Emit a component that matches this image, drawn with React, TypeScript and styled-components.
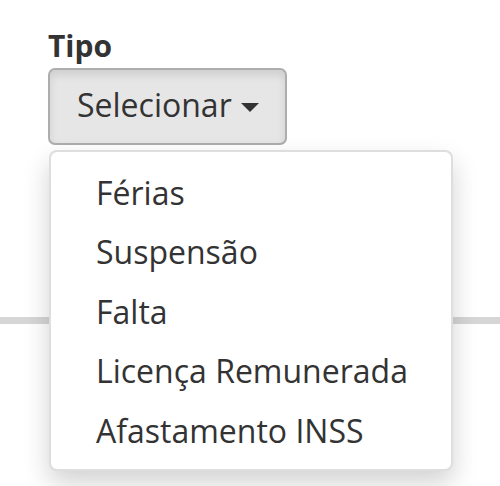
import React from "react";
import styled, { createGlobalStyle } from "styled-components";

const Global = createGlobalStyle`
  html, body { margin: 0; padding: 0; background: #ffffff; }
  body { font-family: "Open Sans", "Liberation Sans", sans-serif; color: #333333; }
  * { box-sizing: border-box; }
`;

const Page = styled.div`
  width: 500px;
  height: 486px;
  overflow: hidden;
  display: flex;
  flex-direction: column;
`;

const Field = styled.div`
  padding: 25px 0 0 48px;
  height: 317px;
`;

const Label = styled.div`
  font-size: 30px;
  font-weight: 700;
  line-height: 42px;
  height: 43px;
  color: #333333;
`;

const DropdownWrap = styled.div`
  position: relative;
  display: inline-block;
`;

const ToggleButton = styled.button`
  display: flex;
  align-items: center;
  gap: 9px;
  height: 77px;
  width: 239px;
  padding: 0 0 3px 27px;
  font-family: "Open Sans", "Liberation Sans", sans-serif;
  font-size: 32px;
  line-height: 42px;
  color: #333333;
  background: #e6e6e6;
  border: 2px solid #adadad;
  border-radius: 7px;
  box-shadow: inset 0 5px 9px rgba(0, 0, 0, 0.1);
`;

const Caret = styled.span`
  display: inline-block;
  width: 0;
  height: 0;
  border-top: 9px solid #333333;
  border-left: 9px solid transparent;
  border-right: 9px solid transparent;
  margin-top: 4px;
`;

const Menu = styled.ul`
  position: absolute;
  top: 82px;
  left: 1px;
  width: 404px;
  height: 321px;
  margin: 0;
  padding: 11px 0 13px;
  list-style: none;
  background: #ffffff;
  border: 2px solid rgba(0, 0, 0, 0.13);
  border-radius: 8px;
  box-shadow: 0 12px 26px rgba(0, 0, 0, 0.18);
  z-index: 10;
`;

const Item = styled.li`
  padding: 0 0 0 45px;
  font-size: 32px;
  line-height: 59.4px;
  height: 59.4px;
  color: #333333;
  white-space: nowrap;
`;

const Divider = styled.div`
  height: 7px;
  background: #d6d6d6;
  width: 100%;
`;

const items = ["Férias", "Suspensão", "Falta", "Licença Remunerada", "Afastamento INSS"];

export default function App() {
  return (
    <Page>
      <Global />
      <Field>
        <Label>Tipo</Label>
        <DropdownWrap>
          <ToggleButton>
            Selecionar
            <Caret />
          </ToggleButton>
          <Menu>
            {items.map((t) => (
              <Item key={t}>{t}</Item>
            ))}
          </Menu>
        </DropdownWrap>
      </Field>
      <Divider />
    </Page>
  );
}
